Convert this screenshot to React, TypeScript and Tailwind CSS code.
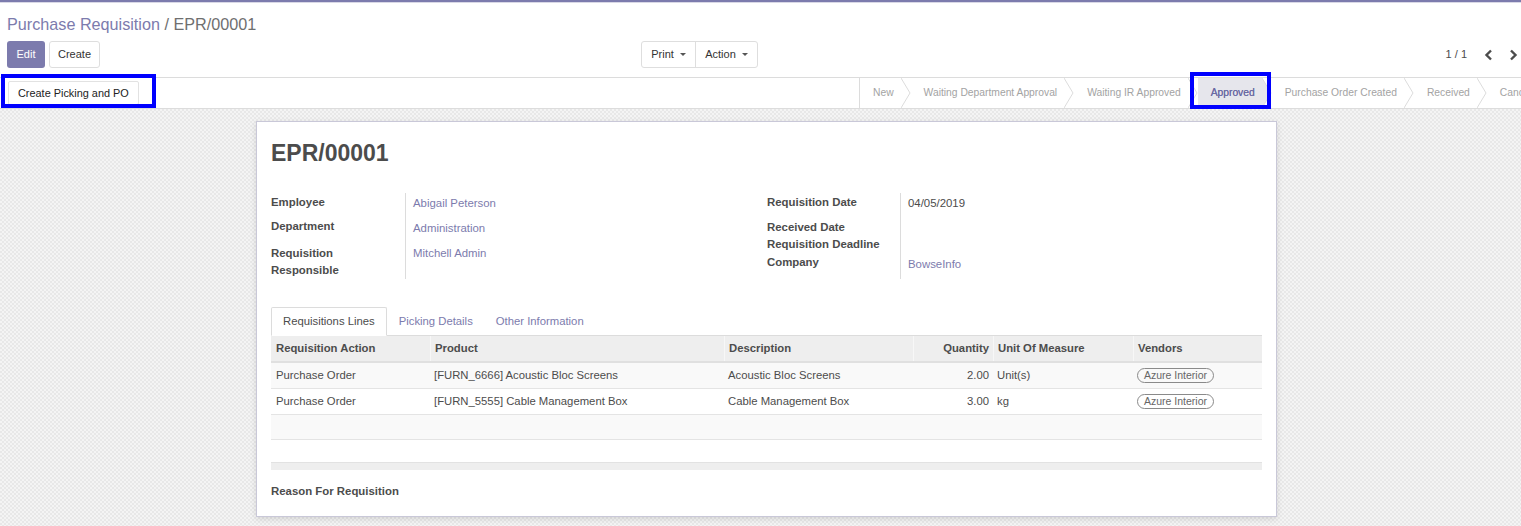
import React from "react";

const F = "font-['Liberation_Sans',Arial,Helvetica,sans-serif]";

function Chevron({ filled }: { filled?: boolean }) {
  return (
    <svg width="10" height="30" viewBox="0 0 10 30" className="shrink-0 block">
      {filled && <polygon points="0,0 9,15 0,30" fill="#e6e6ec" />}
      <polyline points="0,0 9,15 0,30" fill="none" stroke="#dcdcdc" strokeWidth="1" />
    </svg>
  );
}

function Step({ label, active, last }: { label: string; active?: boolean; last?: boolean }) {
  return (
    <>
      <div
        className={
          "h-[30px] flex items-center pl-[13px] pr-[7px] whitespace-nowrap text-[10.3px] " +
          (active ? "bg-[#e6e6ec] text-[#6b6aa3] [text-shadow:0_0_0.4px_#6b6aa3]" : "text-[#a3a3a3]")
        }
      >
        {label}
      </div>
      {!last && <Chevron filled={active} />}
    </>
  );
}

function Caret() {
  return <span className="inline-block ml-[6px] w-0 h-0 border-l-[3px] border-r-[3px] border-t-[3px] border-l-transparent border-r-transparent border-t-[#555] align-middle" />;
}

const cols = [
  { w: "w-[159px]", label: "Requisition Action" },
  { w: "w-[294px]", label: "Product" },
  { w: "w-[189px]", label: "Description" },
  { w: "w-[80px]", label: "Quantity", right: true },
  { w: "w-[140px]", label: "Unit Of Measure" },
  { w: "w-[129px]", label: "Vendors" },
];

const rows = [
  ["Purchase Order", "[FURN_6666] Acoustic Bloc Screens", "Acoustic Bloc Screens", "2.00", "Unit(s)", "Azure Interior"],
  ["Purchase Order", "[FURN_5555] Cable Management Box", "Cable Management Box", "3.00", "kg", "Azure Interior"],
];

export default function App() {
  return (
    <div className={"relative w-[1521px] h-[526px] overflow-hidden bg-white text-[#4c4c4c] flex flex-col " + F}>
      <div className="h-[2px] bg-[#7c7bad] shrink-0" />
      <div className="h-[1px] bg-[#d9d8e6] shrink-0" />

      {/* Control panel */}
      <div className="px-[7px] pt-[11px] border-b border-[#dcdcdc] pb-[9px] shrink-0">
        <div className="text-[16.2px] leading-[20px] h-[20px]">
          <span className="text-[#7c7bad]">Purchase Requisition</span>
          <span className="text-[#6f6f6f]"> / EPR/00001</span>
        </div>
        <div className="mt-[7px] h-[27px] flex items-center">
          <div className="w-[634px] flex items-center gap-[4px] h-full">
            <button className="h-[27px] w-[38px] rounded-[3px] bg-[#7c7bad] text-white text-[11px]">Edit</button>
            <button className="h-[27px] w-[51px] rounded-[3px] bg-white border border-[#dedede] text-[#333] text-[11px]">Create</button>
          </div>
          <div className="flex h-[27px] border border-[#dedede] rounded-[3px] text-[11px] text-[#333]">
            <div className="w-[53px] flex items-center justify-center">Print<Caret /></div>
            <div className="w-[62px] flex items-center justify-center border-l border-[#dedede]">Action<Caret /></div>
          </div>
          <div className="ml-auto mr-[-4px] flex items-center text-[11px] text-[#4c4c4c]">
            <span>1 / 1</span>
            <svg width="10" height="12" viewBox="0 0 10 12" className="ml-[17px]">
              <polyline points="7,1.5 2.5,6 7,10.5" fill="none" stroke="#4c4c4c" strokeWidth="2.4" />
            </svg>
            <svg width="10" height="12" viewBox="0 0 10 12" className="ml-[14px]">
              <polyline points="3,1.5 7.5,6 3,10.5" fill="none" stroke="#4c4c4c" strokeWidth="2.4" />
            </svg>
          </div>
        </div>
      </div>

      {/* Statusbar */}
      <div className="h-[31px] border-b border-[#dcdcdc] flex items-center overflow-hidden shrink-0">
        <div className="w-[859px] shrink-0 pl-[8px] flex items-center">
          <button className="h-[24px] px-[9px] bg-white border border-[#e2e2e2] rounded-[2px] text-[10.9px] text-[#222] whitespace-nowrap">
            Create Picking and PO
          </button>
        </div>
        <div className="flex items-center border-l border-[#dcdcdc] shrink-0 h-[30px]">
          <Step label="New" />
          <Step label="Waiting Department Approval" />
          <Step label="Waiting IR Approved" />
          <Step label="Approved" active />
          <Step label="Purchase Order Created" />
          <Step label="Received" />
          <Step label="Cancel" last />
        </div>
      </div>

      {/* Sheet background */}
      <div className="flex-1 pt-[12px] bg-[#efefef] bg-[image:repeating-conic-gradient(#e8e8e8_0%_25%,#f4f4f4_0%_50%)] bg-[length:4px_4px]">
        <div className="ml-[256px] w-[1021px] bg-white border border-[#c9c8d8] shadow-[0_2px_6px_rgba(0,0,0,0.12)] px-[14px] pt-[17px] pb-[16px]">
          <h1 className="text-[23px] leading-[28px] font-bold text-[#4c4c4c]">EPR/00001</h1>

          {/* Fields */}
          <div className="mt-[26px] flex text-[11.4px] leading-[17px]">
            <div className="w-[496px] flex">
              <div className="w-[134px] font-bold">
                <div className="h-[25px] pt-[1px]">Employee</div>
                <div className="h-[26px]">Department</div>
                <div className="h-[35px] pt-[1px]">Requisition<br />Responsible</div>
              </div>
              <div className="border-l border-[#dcdcdc] pl-[7px] h-[86px] text-[#7c7bad]">
                <div className="h-[26px] pt-[2px]">Abigail Peterson</div>
                <div className="h-[26px] pt-[1px]">Administration</div>
                <div className="h-[34px]">Mitchell Admin</div>
              </div>
            </div>
            <div className="flex-1 flex">
              <div className="w-[133px] font-bold">
                <div className="h-[25px] pt-[1px]">Requisition Date</div>
                <div className="h-[18px] pt-[1px]">Received Date</div>
                <div className="h-[18px]">Requisition Deadline</div>
                <div className="h-[25px]">Company</div>
              </div>
              <div className="border-l border-[#dcdcdc] pl-[7px] h-[86px]">
                <div className="h-[61px] pt-[2px]">04/05/2019</div>
                <div className="text-[#7c7bad] pt-[2px]">BowseInfo</div>
              </div>
            </div>
          </div>

          {/* Tabs */}
          <div className="mt-[28px] flex h-[29px] border-b border-[#dcdcdc] text-[11.3px]">
            <div className="px-[11px] h-[29px] -mb-px flex items-center border border-[#dcdcdc] border-b-white bg-white rounded-t-[2px] text-[#4c4c4c]">
              Requisitions Lines
            </div>
            <div className="px-[12px] flex items-center text-[#7c7bad]">Picking Details</div>
            <div className="px-[11px] flex items-center text-[#7c7bad]">Other Information</div>
          </div>

          {/* Table */}
          <div className="w-[991px] text-[11.3px]">
            <div className="flex h-[27px] bg-[#eeeeee] border-b-2 border-[#e0e0e0] font-bold">
              {cols.map((c, i) => (
                <div
                  key={c.label}
                  className={
                    c.w +
                    " flex items-center whitespace-nowrap " +
                    (i > 0 ? "border-l border-[#f7f7f7] " : "") +
                    (c.right ? "justify-end pr-[4px]" : "pl-[4px]") +
                    (i === 0 ? " pl-[5px]" : "")
                  }
                >
                  {c.label}
                </div>
              ))}
            </div>
            {rows.map((r, ri) => (
              <div key={ri} className={"flex h-[26px] border-b border-[#e4e4e4] " + (ri % 2 === 0 ? "bg-[#f9f9f9]" : "bg-white")}>
                {r.map((v, i) => (
                  <div
                    key={i}
                    className={
                      cols[i].w +
                      " flex items-center whitespace-nowrap " +
                      (cols[i].right ? "justify-end pr-[4px]" : "pl-[4px]") +
                      (i === 0 ? " pl-[5px]" : "")
                    }
                  >
                    {i === 5 ? (
                      <span className="border border-[#8a8a8a] rounded-full px-[6px] leading-[13px] text-[10.5px] text-[#666]">{v}</span>
                    ) : (
                      v
                    )}
                  </div>
                ))}
              </div>
            ))}
            <div className="h-[25px] bg-[#f9f9f9] border-b border-[#e4e4e4]" />
            <div className="h-[22px]" />
            <div className="h-[8px] bg-[#eeeeee] border-t border-[#e2e2e2]" />
          </div>

          <div className="mt-[13px] text-[11.4px] leading-[17px] font-bold">Reason For Requisition</div>
        </div>
      </div>

      {/* Annotation boxes */}
      <div className="absolute left-[1px] top-[74px] w-[155px] h-[34px] border-[4px] border-[#0000ff] pointer-events-none" />
      <div className="absolute left-[1190px] top-[72px] w-[81px] h-[37px] border-[4px] border-[#0000ff] pointer-events-none" />
    </div>
  );
}
